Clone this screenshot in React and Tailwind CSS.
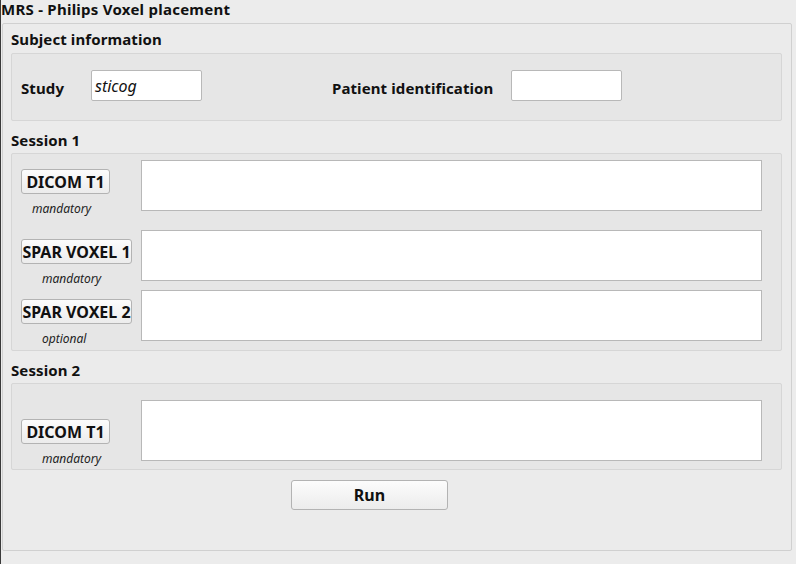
import React from "react";

const font = { fontFamily: '"Noto Sans", "Open Sans", sans-serif' };

function QtButton({ children, className = "" }) {
  return (
    <div
      className={
        "flex shrink-0 items-center justify-center rounded-[3px] border border-[#b3b3b3] bg-gradient-to-b from-[#fcfcfc] to-[#ececec] text-[16px] font-bold text-[#111] " +
        className
      }
    >
      {children}
    </div>
  );
}

function Field({ className = "", children }) {
  return (
    <div className={"shrink-0 border border-[#b8b8b8] bg-white " + className}>{children}</div>
  );
}

function FileRow({ label, note, btnW, noteMl, rowClass = "", fieldH = "h-[51px]", btnPt = "pt-[9px]" }) {
  return (
    <div className={"flex items-start " + rowClass}>
      <div className={"flex h-0 w-[120px] flex-col items-start overflow-visible " + btnPt}>
        <QtButton className={"h-[25px] " + btnW}>{label}</QtButton>
        <div className={"mt-[7px] whitespace-nowrap text-[12px] italic leading-[16px] text-[#222] " + noteMl}>
          {note}
        </div>
      </div>
      <Field className={fieldH + " w-[621px]"} />
    </div>
  );
}

export default function App() {
  return (
    <div
      style={font}
      className="relative h-[564px] w-[796px] overflow-hidden border-l border-[#3a3a3a] bg-[#ececec] text-[#111]"
    >
      <div className="h-[22px] pt-[0px] text-[15px] font-bold leading-[19px] tracking-[0.25px]">
        MRS - Philips Voxel placement
      </div>
      <div className="ml-[1px] mt-[1px] h-[528px] w-[790px] rounded-[2px] border border-[#d0d0d0] bg-[#ebebeb] px-[8px]">
        {/* Subject information */}
        <div className="h-[29px] pt-[6px] text-[15px] font-bold leading-[19px] tracking-[0.1px]">
          Subject information
        </div>
        <div className="h-[68px] w-[771px] rounded-[2px] border border-[#d6d6d6] bg-[#e6e6e6] pl-[9px] pt-[16px]">
          <div className="flex h-[31px] items-center">
            <div className="w-[70px] pt-[5px] text-[15px] font-bold tracking-[0.1px]">Study</div>
            <Field className="flex h-[31px] w-[111px] items-center rounded-[2px] pl-[3px] text-[16px] italic">
              sticog
            </Field>
            <div className="ml-[130px] w-[179px] pt-[5px] text-[15px] font-bold tracking-[0.1px]">
              Patient identification
            </div>
            <Field className="h-[31px] w-[111px] rounded-[2px]" />
          </div>
        </div>

        {/* Session 1 */}
        <div className="h-[32px] pt-[10px] text-[15px] font-bold leading-[19px] tracking-[0.1px]">
          Session 1
        </div>
        <div className="h-[198px] w-[771px] rounded-[2px] border border-[#d6d6d6] bg-[#e6e6e6] pl-[9px] pt-[6px]">
          <FileRow label="DICOM T1" note="mandatory" btnW="w-[89px]" noteMl="ml-[11px]" />
          <FileRow label="SPAR VOXEL 1" note="mandatory" btnW="w-[111px]" noteMl="ml-[21px]" rowClass="mt-[19px]" />
          <FileRow label="SPAR VOXEL 2" note="optional" btnW="w-[111px]" noteMl="ml-[21px]" rowClass="mt-[9px]" />
        </div>

        {/* Session 2 */}
        <div className="h-[32px] pt-[10px] text-[15px] font-bold leading-[19px] tracking-[0.1px]">
          Session 2
        </div>
        <div className="h-[87px] w-[771px] rounded-[2px] border border-[#d6d6d6] bg-[#e6e6e6] pl-[9px] pt-[16px]">
          <FileRow
            label="DICOM T1"
            note="mandatory"
            btnW="w-[89px]"
            noteMl="ml-[21px]"
            fieldH="h-[61px]"
            btnPt="pt-[19px]"
          />
        </div>

        <div className="mt-[10px] flex">
          <QtButton className="ml-[280px] h-[30px] w-[157px] rounded-[3px]">Run</QtButton>
        </div>
      </div>
    </div>
  );
}
